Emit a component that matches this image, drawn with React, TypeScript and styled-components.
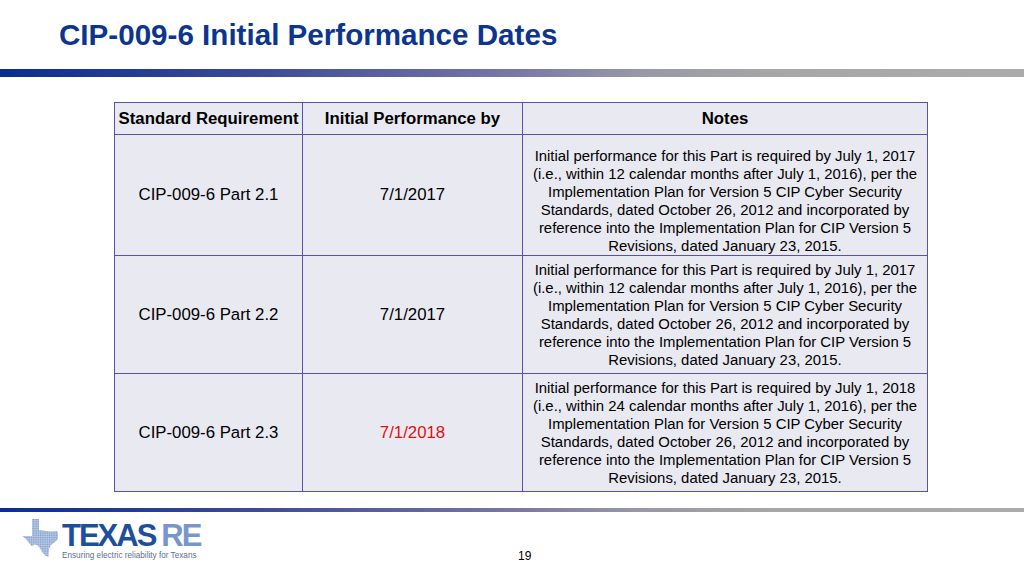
import styled, { createGlobalStyle } from "styled-components";

type Row = {
  part: string;
  date: string;
  late?: boolean;
  note: string;
  shift?: number;
};

const rows: Row[] = [
  {
    part: "CIP-009-6 Part 2.1",
    date: "7/1/2017",
    note: "Initial performance for this Part is required by July 1, 2017 (i.e., within 12 calendar months after July 1, 2016), per the Implementation Plan for Version 5 CIP Cyber Security Standards, dated October 26, 2012 and incorporated by reference into the Implementation Plan for CIP Version 5 Revisions, dated January 23, 2015.",
    shift: 12,
  },
  {
    part: "CIP-009-6 Part 2.2",
    date: "7/1/2017",
    note: "Initial performance for this Part is required by July 1, 2017 (i.e., within 12 calendar months after July 1, 2016), per the Implementation Plan for Version 5 CIP Cyber Security Standards, dated October 26, 2012 and incorporated by reference into the Implementation Plan for CIP Version 5 Revisions, dated January 23, 2015.",
  },
  {
    part: "CIP-009-6 Part 2.3",
    date: "7/1/2018",
    late: true,
    note: "Initial performance for this Part is required by July 1, 2018 (i.e., within 24 calendar months after July 1, 2016), per the Implementation Plan for Version 5 CIP Cyber Security Standards, dated October 26, 2012 and incorporated by reference into the Implementation Plan for CIP Version 5 Revisions, dated January 23, 2015.",
  },
];

const App = () => {
  return (
    <>
      <GlobalStyle />
      <Slide>
        <Header>
          <Title>CIP-009-6 Initial Performance Dates</Title>
        </Header>
        <Bar $thick />
        <Main>
          <Table>
            <colgroup>
              <col style={{ width: 188 }} />
              <col style={{ width: 220 }} />
              <col style={{ width: 405 }} />
            </colgroup>
            <thead>
              <tr>
                <Th>Standard Requirement</Th>
                <Th>Initial Performance by</Th>
                <Th>Notes</Th>
              </tr>
            </thead>
            <tbody>
              {rows.map((r) => (
                <tr key={r.part}>
                  <Td>{r.part}</Td>
                  <Td $late={r.late}>{r.date}</Td>
                  <NoteCell>
                    <Note $shift={r.shift ?? 0}>{r.note}</Note>
                  </NoteCell>
                </tr>
              ))}
            </tbody>
          </Table>
        </Main>
        <Bar />
        <Footer>
          <Logo>
            <TexasMark />
            <LogoText>
              <Wordmark>
                TEXAS<Re>RE</Re>
              </Wordmark>
              <Tagline>Ensuring electric reliability for Texans</Tagline>
            </LogoText>
          </Logo>
          <PageNum>19</PageNum>
        </Footer>
      </Slide>
    </>
  );
};

// dotted Texas silhouette from the logo
const TexasMark = () => (
  <MarkSvg width="37" height="39" viewBox="0 0 37 39">
    <defs>
      <pattern id="dots" width="1.8" height="1.8" patternUnits="userSpaceOnUse">
        <rect x="0.2" y="0.2" width="1.2" height="1.2" fill="#2f62ad" />
      </pattern>
    </defs>
    <path
      d="M10 0 L17 0 L17 11 L24 12 L30 12.5 L35 12 L36 14 L36 20 L33 23 L29 26 L27 30 L26.5 38 L23 36.5 L20 33 L18 29 L15 26 L12 25.5 L10 27.5 L7 24 L4 20 L0 17 L10 17 Z"
      fill="url(#dots)"
    />
  </MarkSvg>
);

export default App;

const GlobalStyle = createGlobalStyle`
  html, body {
    margin: 0;
    padding: 0;
    background: #ffffff;
  }
  body {
    font-family: "Liberation Sans", Arial, sans-serif;
  }
`;

const Slide = styled.div`
  width: 1024px;
  height: 576px;
  display: flex;
  flex-direction: column;
  overflow: hidden;
  background: #ffffff;
`;

const Header = styled.div`
  height: 69px;
  display: flex;
  align-items: center;
  padding-left: 59px;
`;

const Title = styled.h1`
  margin: 0;
  font-size: 29.6px;
  font-weight: 700;
  color: #0d3590;
`;

const Bar = styled.div<{ $thick?: boolean }>`
  height: ${(p) => (p.$thick ? "8px" : "4px")};
  flex-shrink: 0;
  background: linear-gradient(
    to right,
    #0a2e8e 0%,
    #3b4a98 25%,
    #7777a6 50%,
    #9797a8 62%,
    #a6a6a6 75%,
    #ababab 100%
  );
`;

const Main = styled.div`
  height: 431px;
  padding: 25px 0 0 114px;
  box-sizing: border-box;
`;

const Table = styled.table`
  border-collapse: collapse;
  table-layout: fixed;
  width: 813px;
  background: #e9e9f1;
  color: #000000;
`;

const Th = styled.th`
  height: 30px;
  padding: 1px 0 0;
  border: 1.5px solid #5a50b2;
  font-size: 16.8px;
  font-weight: 700;
  text-align: center;
  white-space: nowrap;
`;

const Td = styled.td<{ $late?: boolean }>`
  height: 117px;
  padding: 0;
  border: 1.5px solid #5a50b2;
  font-size: 16.8px;
  text-align: center;
  color: ${(p) => (p.$late ? "#e01010" : "#000000")};
`;

const NoteCell = styled.td`
  padding: 0 6px;
  border: 1.5px solid #5a50b2;
  text-align: center;
  vertical-align: middle;
`;

const Note = styled.div<{ $shift: number }>`
  font-size: 14.9px;
  line-height: 18px;
  padding-top: ${(p) => p.$shift}px;
`;

const Footer = styled.div`
  flex: 1;
  display: flex;
  align-items: flex-start;
  padding: 7px 0 0 22px;
`;

const Logo = styled.div`
  display: flex;
  align-items: flex-start;
  gap: 3px;
  width: 178px;
  flex-shrink: 0;
`;

const MarkSvg = styled.svg`
  flex-shrink: 0;
`;

const LogoText = styled.div`
  display: flex;
  flex-direction: column;
  padding-top: 2px;
  white-space: nowrap;
`;

const Wordmark = styled.div`
  font-size: 31px;
  font-weight: 700;
  line-height: 29px;
  letter-spacing: -2px;
  color: #1d4f9c;
`;

const Re = styled.span`
  color: #7896cc;
  margin-left: 6px;
`;

const Tagline = styled.div`
  font-size: 8.2px;
  color: #5d6f8a;
  margin-top: 1px;
`;

const PageNum = styled.div`
  margin-left: 318px;
  margin-top: 30px;
  font-size: 12px;
  color: #000000;
`;
